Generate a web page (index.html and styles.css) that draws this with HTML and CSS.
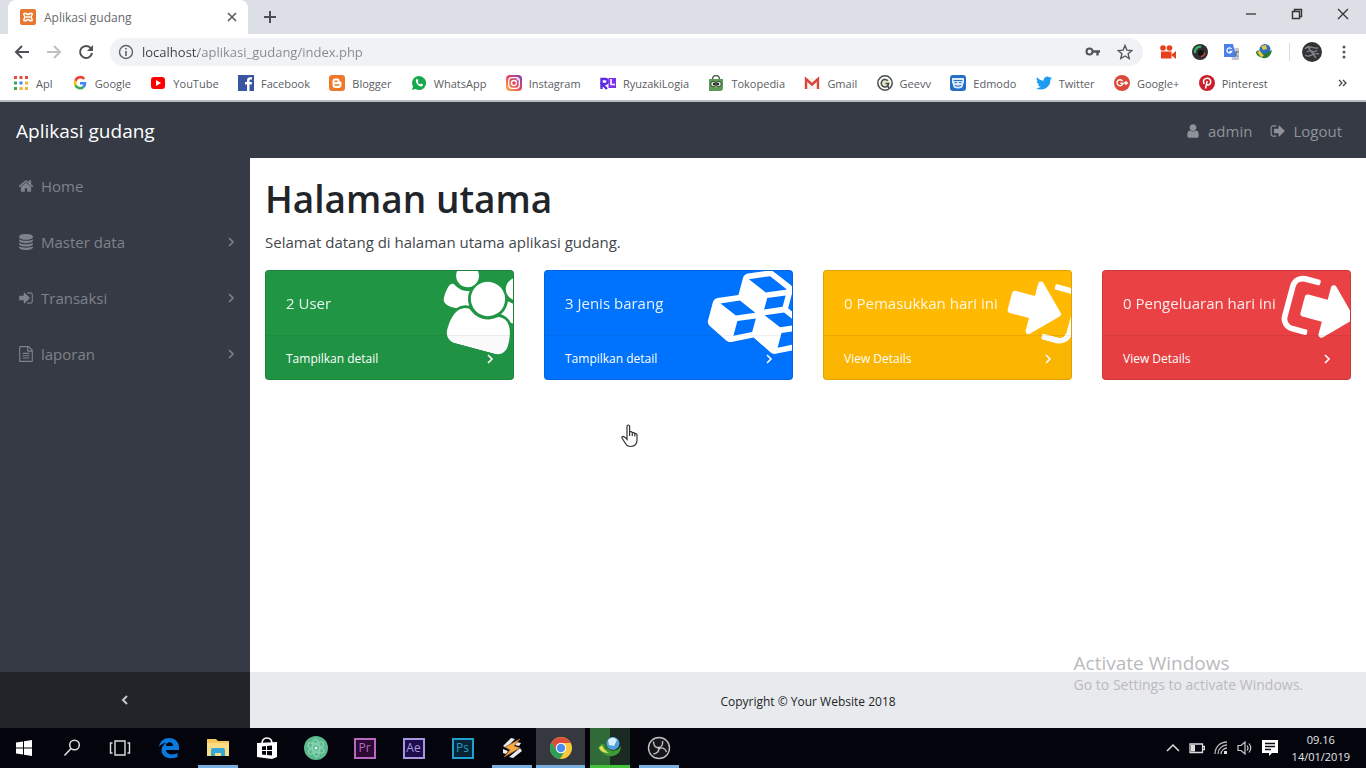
FILE: index.html
```html
<!DOCTYPE html>
<html lang="id">
<head>
<meta charset="utf-8">
<title>Aplikasi gudang</title>
<link rel="stylesheet" href="styles.css">
</head>
<body>
<svg class="defs" aria-hidden="true">
  <symbol id="users" viewBox="0 0 1920 1792"><path d="M593 896q-162 5-265 128h-134q-82 0-138-40.5t-56-118.5q0-353 124-353 6 0 43.5 21t97.5 42.5 119 21.5q67 0 133-23-5 37-5 66 0 139 81 256zm1071 637q0 120-73 189.5t-194 69.5h-874q-121 0-194-69.5t-73-189.5q0-53 3.5-103.5t14-109 26.5-108.5 43-97.5 62-81 85.5-53.5 111.5-20q10 0 43 21.5t73 48 107 48 135 21.5 135-21.5 107-48 73-48 43-21.5q61 0 111.5 20t85.5 53.5 62 81 43 97.5 26.5 108.5 14 109 3.5 103.5zm-1024-1277q0 106-75 181t-181 75-181-75-75-181 75-181 181-75 181 75 75 181zm704 384q0 159-112.5 271.5t-271.5 112.5-271.5-112.5-112.5-271.5 112.5-271.5 271.5-112.5 271.5 112.5 112.5 271.5zm576 225q0 78-56 118.5t-138 40.5h-134q-103-123-265-128 81-117 81-256 0-29-5-66 66 23 133 23 59 0 119-21.5t97.5-42.5 43.5-21q124 0 124 353zm-128-609q0 106-75 181t-181 75-181-75-75-181 75-181 181-75 181 75 75 181z"/></symbol>
  <symbol id="cubes" viewBox="0 0 2304 1792"><path d="M640 1632l384-192v-314l-384 164v342zm-64-454l404-173-404-173-404 173zm1088 454l384-192v-314l-384 164v342zm-64-454l404-173-404-173-404 173zm-448-293l384-165v-266l-384 164v267zm-64-379l441-189-441-189-441 189zm1088 518v416q0 36-19 67t-52 47l-448 224q-25 14-57 14t-57-14l-448-224q-4-2-7-4-2 2-7 4l-448 224q-25 14-57 14t-57-14l-448-224q-33-16-52-47t-19-67v-416q0-38 21.5-70t56.5-48l434-186v-400q0-38 21.5-70t56.5-48l448-192q23-10 50-10t50 10l448 192q35 16 56.5 48t21.5 70v400l434 186q36 16 57 48t21 70z"/></symbol>
  <symbol id="sign-in" viewBox="0 0 1792 1792"><path d="M1312 896q0 26-19 45l-544 544q-19 19-45 19t-45-19-19-45v-288h-448q-26 0-45-19t-19-45v-384q0-26 19-45t45-19h448v-288q0-26 19-45t45-19 45 19l544 544q19 19 19 45zm352-352v704q0 119-84.5 203.5t-203.5 84.5h-320q-13 0-22.5-9.5t-9.5-22.5q0-4-1-20t-.5-26.5 3-23.5 10-19.5 20.5-6.5h320q66 0 113-47t47-113v-704q0-66-47-113t-113-47h-312l-11.5-1-11.5-3-8-5.5-7-9-2-13.5q0-4-1-20t-.5-26.5 3-23.5 10-19.5 20.5-6.5h320q119 0 203.5 84.5t84.5 203.5z"/></symbol>
  <symbol id="sign-out" viewBox="0 0 1792 1792"><path d="M704 1440q0 4 1 20t.5 26.5-3 23.5-10 19.5-20.5 6.5h-320q-119 0-203.5-84.5t-84.5-203.5v-704q0-119 84.5-203.5t203.5-84.5h320q13 0 22.5 9.5t9.5 22.5q0 4 1 20t.5 26.5-3 23.5-10 19.5-20.5 6.5h-320q-66 0-113 47t-47 113v704q0 66 47 113t113 47h312l11.5 1 11.5 3 8 5.5 7 9 2 13.5zm928-544q0 26-19 45l-544 544q-19 19-45 19t-45-19-19-45v-288h-448q-26 0-45-19t-19-45v-384q0-26 19-45t45-19h448v-288q0-26 19-45t45-19 45 19l544 544q19 19 19 45z"/></symbol>
  <symbol id="home" viewBox="0 0 1792 1792"><path d="M1472 992v480q0 26-19 45t-45 19h-384v-384h-256v384h-384q-26 0-45-19t-19-45v-480q0-1 .5-3t.5-3l575-474 575 474q1 2 1 6zm223-69l-62 74q-8 9-21 11h-3q-13 0-21-7l-692-577-692 577q-12 8-24 7-13-2-21-11l-62-74q-8-10-7-23.5t11-21.5l719-599q32-26 76-26t76 26l244 204v-195q0-14 9-23t23-9h192q14 0 23 9t9 23v408l219 182q10 8 11 21.5t-7 23.5z"/></symbol>
  <symbol id="database" viewBox="0 0 1792 1792"><path d="M896 768q237 0 443-43t325-127v170q0 69-103 128t-280 93.5-385 34.5-385-34.5-280-93.5-103-128v-170q119 84 325 127t443 43zm0 768q237 0 443-43t325-127v170q0 69-103 128t-280 93.5-385 34.5-385-34.5-280-93.5-103-128v-170q119 84 325 127t443 43zm0-384q237 0 443-43t325-127v170q0 69-103 128t-280 93.5-385 34.5-385-34.5-280-93.5-103-128v-170q119 84 325 127t443 43zm0-1152q208 0 385 34.5t280 93.5 103 128v128q0 69-103 128t-280 93.5-385 34.5-385-34.5-280-93.5-103-128v-128q0-69 103-128t280-93.5 385-34.5z"/></symbol>
  <symbol id="file" viewBox="0 0 1792 1792"><path d="M1596 380q28 28 48 76t20 88v1152q0 40-28 68t-68 28h-1344q-40 0-68-28t-28-68v-1600q0-40 28-68t68-28h896q40 0 88 20t76 48zm-444-244v376h376q-10-29-22-41l-313-313q-12-12-41-22zm384 1528v-1024h-416q-40 0-68-28t-28-68v-416h-768v1536h1280zm-1024-864q0-14 9-23t23-9h704q14 0 23 9t9 23v64q0 14-9 23t-23 9h-704q-14 0-23-9t-9-23v-64zm736 224q14 0 23 9t9 23v64q0 14-9 23t-23 9h-704q-14 0-23-9t-9-23v-64q0-14 9-23t23-9h704zm0 256q14 0 23 9t9 23v64q0 14-9 23t-23 9h-704q-14 0-23-9t-9-23v-64q0-14 9-23t23-9h704z"/></symbol>
  <symbol id="user" viewBox="0 0 1792 1792"><path d="M1536 1399q0 109-62.5 187t-150.5 78h-854q-88 0-150.5-78t-62.5-187q0-85 8.5-160.5t31.5-152 58.5-131 94-89 134.5-34.5q131 128 313 128t313-128q76 0 134.5 34.5t94 89 58.5 131 31.5 152 8.5 160.5zm-256-887q0 159-112.5 271.5t-271.5 112.5-271.5-112.5-112.5-271.5 112.5-271.5 271.5-112.5 271.5 112.5 112.5 271.5z"/></symbol>
  <symbol id="chevron" viewBox="0 0 8 10"><path d="M2 1l4 4-4 4" fill="none" stroke="currentColor" stroke-width="1.6"/></symbol>
</svg>

<header class="browser">
  <div class="tabstrip">
    <div class="tab">
      <svg class="i16" viewBox="0 0 16 16"><rect width="16" height="16" rx="2" fill="#e8772e"/><path d="M4 4.500c2-1 3 1 4 1s2-2 4-1c1 1-1 2.500-1 3.500s2 2.500 1 3.500c-2 1-3-1-4-1s-2 2-4 1c-1-1 1-2.500 1-3.500s-2-2.500-1-3.500zM6 8h4" fill="none" stroke="#fff" stroke-width="1.600"/></svg>
      <span class="tab-title">Aplikasi gudang</span>
      <button class="plain" aria-label="Close tab"><svg class="i10" viewBox="0 0 10 10"><path d="M1 1l8 8M9 1l-8 8" stroke="#55585c" stroke-width="1.600"/></svg></button>
    </div>
    <button class="plain newtab" aria-label="New tab"><svg class="i12" viewBox="0 0 12 12"><path d="M6 0v12M0 6h12" stroke="#4b4e52" stroke-width="2"/></svg></button>
    <div class="window-controls">
      <button class="plain" aria-label="Minimize"><svg class="i12" viewBox="0 0 12 12"><path d="M1 6h10" stroke="#444" stroke-width="1.400"/></svg></button>
      <button class="plain" aria-label="Restore"><svg class="i12" viewBox="0 0 12 12"><path d="M1.500 3.500h7v7h-7zM3.500 3V1.500h7v7H9" fill="none" stroke="#333" stroke-width="1.400"/></svg></button>
      <button class="plain" aria-label="Close"><svg class="i12" viewBox="0 0 12 12"><path d="M1 1l10 10M11 1L1 11" stroke="#333" stroke-width="1.300"/></svg></button>
    </div>
  </div>

  <div class="toolbar">
    <button class="plain" aria-label="Back"><svg class="i16" viewBox="0 0 16 16"><path d="M15 8H2M8 2L2 8l6 6" fill="none" stroke="#4e5155" stroke-width="2"/></svg></button>
    <button class="plain" aria-label="Forward"><svg class="i16" viewBox="0 0 16 16"><path d="M1 8h13M8 2l6 6-6 6" fill="none" stroke="#bfc0c4" stroke-width="2"/></svg></button>
    <button class="plain" aria-label="Reload"><svg class="i16" viewBox="0 0 16 16"><path d="M13 4.500A6 6 0 1 0 14 9" fill="none" stroke="#4e5155" stroke-width="2"/><path d="M15 1v6H9z" fill="#4e5155"/></svg></button>
    <div class="omnibox">
      <svg class="i16" viewBox="0 0 16 16"><circle cx="8" cy="8" r="6.500" fill="none" stroke="#5f6368" stroke-width="1.400"/><path d="M8 7v5M8 4v1.600" stroke="#5f6368" stroke-width="1.600"/></svg>
      <input class="url" type="text" aria-label="Address" value="localhost/aplikasi_gudang/index.php">
      <svg class="i16" viewBox="0 0 16 16"><circle cx="4.500" cy="7.500" r="3" fill="none" stroke="#505357" stroke-width="2"/><path d="M7.500 7.500h7.500M12.500 7.500v4" stroke="#505357" stroke-width="2.400"/></svg>
      <svg class="i16" viewBox="0 0 16 16"><path d="M8 1.500l1.900 4.600 4.900.4-3.700 3.200 1.100 4.800L8 12l-4.200 2.500 1.100-4.800L1.200 6.500l4.900-.4z" fill="none" stroke="#55585c" stroke-width="1.400"/></svg>
    </div>
    <div class="extensions">
      <svg class="i18" viewBox="0 0 18 18"><g fill="#e8401c"><circle cx="4" cy="5" r="2.800"/><circle cx="10.500" cy="5" r="2.800"/><rect x="2" y="8.500" width="10.500" height="7"/><path d="M12 12l5-4v8z"/></g></svg>
      <svg class="i18" viewBox="0 0 18 18"><circle cx="9" cy="9" r="8" fill="#303033"/><path d="M4 10a5 5 0 0 1 6-6" fill="none" stroke="#37b26a" stroke-width="2.500"/><circle cx="10" cy="10" r="3" fill="#111"/><path d="M10 13.500a4 4 0 0 0 3.500-4" fill="none" stroke="#c44" stroke-width="1.500"/></svg>
      <svg class="i18" viewBox="0 0 18 18"><path d="M7 5h9v12H9z" fill="#c3c8cf"/><path d="M1 1h9l3 13H1z" fill="#4a80e8"/><path d="M8.500 6a2.500 2.500 0 1 0 .2 2.500H6.500" fill="none" stroke="#fff" stroke-width="1.300"/><path d="M11 9h5M13.500 8c0 3-1 4-2 5M12 10l3 4" stroke="#607d8b"/></svg>
      <svg class="i18" viewBox="0 0 18 18"><circle cx="10" cy="6.500" r="5.500" fill="#2d6fbe"/><path d="M6 3l5-1 1 4-4 1z" fill="#e3c445"/><path d="M1 9c2-3 5-1 5 0s3 3 6 1l5-3c-1 6-5 9-9 8s-7-3-7-6z" fill="#2c7a2e"/><path d="M2 9l3-1 4 5-3 1z" fill="#e8d04c"/></svg>
    </div>
    <svg class="avatar" viewBox="0 0 20 20"><circle cx="10" cy="10" r="10" fill="#333338"/><path d="M3 7c4-5 7 0 13-1M3 13c6 4 6-3 14-1M6 5l8 11M5 10c5-4 7 3 10-2" fill="none" stroke="#85858c" stroke-width="1.300"/></svg>
    <button class="plain" aria-label="Menu"><svg class="menu-dots" viewBox="0 0 4 16"><g fill="#55585c"><circle cx="2" cy="3" r="1.500"/><circle cx="2" cy="8" r="1.500"/><circle cx="2" cy="13" r="1.500"/></g></svg></button>
  </div>

  <nav class="bookmarks" aria-label="Bookmarks">
    <div class="bookmark-list">
    <a href="#"><svg class="i16" viewBox="0 0 16 16"><g fill="#e34a3b"><path d="M1 1h3v3H1zM6.500 1h3v3h-3zM12 1h3v3h-3z"/></g><path d="M1 6.500h3v3H1z" fill="#3aa757"/><path d="M6.500 6.500h3v3h-3z" fill="#4285f4"/><path d="M12 6.500h3v3h-3zM12 12h3v3h-3zM6.500 12h3v3h-3z" fill="#f2b32c"/><path d="M1 12h3v3H1z" fill="#3aa757"/></svg>Apl</a>
    <a href="#"><svg class="i16" viewBox="0 0 16 16"><g fill="none" stroke-width="2.600"><path d="M12.200 4A5 5 0 0 0 3.500 5.800" stroke="#ea4335"/><path d="M3.500 5.800a5 5 0 0 0 0 4.400" stroke="#fbbc05"/><path d="M3.500 10.200a5 5 0 0 0 7.800 1.800" stroke="#34a853"/><path d="M11.300 12A5 5 0 0 0 13 8.200H8" stroke="#4285f4"/></g></svg>Google</a>
    <a href="#"><svg class="i16" viewBox="0 0 16 16"><rect x="1" y="2" width="14" height="12" rx="3" fill="#f00"/><path d="M6 5l5 3-5 3z" fill="#fff"/></svg>YouTube</a>
    <a href="#"><svg class="i16" viewBox="0 0 16 16"><path d="M0 0h16v16H0z" fill="#3a559f"/><path d="M9 16V9.500H7V7h2V5.500C9 3.300 10.300 2.200 12.300 2.200H14v2.300h-1.300c-.8 0-1.200.4-1.200 1.200V7H14l-.4 2.500h-2.100V16z" fill="#fff"/></svg>Facebook</a>
    <a href="#"><svg class="i16" viewBox="0 0 16 16"><rect width="16" height="16" rx="3" fill="#f0782a"/><path d="M6 3.500h2.500a2 2 0 0 1 2 2v1h1a1 1 0 0 1 1 1v2.500a3 3 0 0 1-3 3H6.500a3 3 0 0 1-3-3v-4a2.500 2.500 0 0 1 2.500-2.500z" fill="#fff"/><path d="M6 6.300h2M6 10h4" stroke="#f0782a" stroke-width="1.400" stroke-linecap="round"/></svg>Blogger</a>
    <a href="#"><svg class="i16" viewBox="0 0 16 16"><path d="M8 1a7 7 0 1 1-3.400 13.100L1 15l1-3.500A7 7 0 0 1 8 1z" fill="#18a94f"/><path d="M5 4.500l1.500-.4.900 2-.8 1c.6 1.200 1.400 1.900 2.500 2.400l1-.9 1.900 1-.5 1.500c-3 1.500-7.500-3-6.500-6.600z" fill="#fff"/></svg>WhatsApp</a>
    <a href="#"><svg class="i16" viewBox="0 0 16 16"><defs><linearGradient id="ig" x1="0" y1="1" x2="1" y2="0"><stop stop-color="#fdc03b"/><stop offset=".5" stop-color="#e6455b"/><stop offset="1" stop-color="#7a3bc8"/></linearGradient></defs><rect width="16" height="16" rx="4" fill="url(#ig)"/><rect x="2.700" y="2.700" width="10.600" height="10.600" rx="3" fill="none" stroke="#fff" stroke-width="1.300"/><circle cx="8" cy="8" r="2.500" fill="none" stroke="#fff" stroke-width="1.300"/><circle cx="11.200" cy="4.800" r=".8" fill="#fff"/></svg>Instagram</a>
    <a href="#"><svg class="i16" viewBox="0 0 16 16"><path d="M1.500 14V4h3.700a2.300 2.300 0 0 1 0 5H2l5 5" fill="none" stroke="#5a2be0" stroke-width="2.400"/><path d="M8.500 3H16v10H8.500z" fill="#7a2ff0"/><path d="M11 4v5.500h4" fill="none" stroke="#fff" stroke-width="1.600"/></svg>RyuzakiLogia</a>
    <a href="#"><svg class="i16" viewBox="0 0 16 16"><path d="M4.500 4a3.500 3.500 0 0 1 7 0" fill="none" stroke="#4b5a4b" stroke-width="1.500"/><path d="M1 4h14v9q0 3-3 3H1z" fill="#5c9a58"/><circle cx="5.300" cy="9" r="2.600" fill="#e9efe8" stroke="#344034"/><circle cx="10.700" cy="9" r="2.600" fill="#e9efe8" stroke="#344034"/><circle cx="6" cy="9" r="1.200" fill="#222"/><circle cx="10" cy="9" r="1.200" fill="#222"/><path d="M7 11.500h2l-1 1.500z" fill="#e8c33e"/></svg>Tokopedia</a>
    <a href="#"><svg class="i16" viewBox="0 0 16 16"><path d="M1 3h14v11H1z" fill="#f5f2f1"/><path d="M2 14V4l6 5.500L14 4v10" fill="none" stroke="#d9473a" stroke-width="2.400"/></svg>Gmail</a>
    <a href="#"><svg class="i16" viewBox="0 0 16 16"><circle cx="8" cy="8" r="7.200" fill="#fff" stroke="#454b50" stroke-width="1.500"/><circle cx="8" cy="8" r="5" fill="#dfe8c2"/><path d="M10.800 5.800A3.700 3.700 0 1 0 11.700 8.500H8.500M10 10l2 3" fill="none" stroke="#454b50" stroke-width="1.500"/></svg>Geevv</a>
    <a href="#"><svg class="i16" viewBox="0 0 16 16"><rect width="16" height="16" rx="3" fill="#276fc4"/><path d="M2 3h12v5q-1 0-1 2 0 3.500-5 3.500T3 10q0-2-1-2z" fill="#dcebfb"/><path d="M3.500 5.500h9M4.500 7.500h2.500M9 7.500h2.500M5 10.200q3 2 6 0" fill="none" stroke="#276fc4" stroke-width="1.100"/></svg>Edmodo</a>
    <a href="#"><svg class="i16" viewBox="0 0 24 24"><path d="M24 4.600a10 10 0 0 1-2.800.8 5 5 0 0 0 2.100-2.700 10 10 0 0 1-3.100 1.200 4.900 4.900 0 0 0-8.400 4.500A14 14 0 0 1 1.700 3.200a4.900 4.900 0 0 0 1.500 6.500 5 5 0 0 1-2.200-.6 4.900 4.900 0 0 0 3.900 4.900 5 5 0 0 1-2.200.1 4.900 4.900 0 0 0 4.600 3.400A10 10 0 0 1 0 19.500 14 14 0 0 0 21.500 7.100 10 10 0 0 0 24 4.600z" fill="#1d9bf0"/></svg>Twitter</a>
    <a href="#"><svg class="i16" viewBox="0 0 16 16"><circle cx="8" cy="8" r="8" fill="#db4a39"/><path d="M8.500 6A3 3 0 1 0 9 8.300H6.300M12 6v4M10 8h4" fill="none" stroke="#fff" stroke-width="1.400"/></svg>Google+</a>
    <a href="#"><svg class="i16" viewBox="0 0 16 16"><circle cx="8" cy="8" r="8" fill="#cb1f2c"/><path d="M5.300 9C3 5 6 3.300 8.200 3.300s4 1.500 3.400 4.200-3.500 3.400-4 1.600M8.200 6L6.500 13.500" fill="none" stroke="#fff" stroke-width="1.500"/></svg>Pinterest</a>
    </div>
    <button class="plain" aria-label="More bookmarks"><svg class="i10" viewBox="0 0 10 10"><path d="M1 2l3 3-3 3M5 2l3 3-3 3" fill="none" stroke="#444" stroke-width="1.300"/></svg></button>
  </nav>
</header>

<div class="app">
  <header class="navbar">
    <a class="brand" href="#">Aplikasi gudang</a>
    <nav class="account">
      <a href="#"><svg class="i16"><use href="#user"/></svg>admin</a>
      <a href="#"><svg class="i16"><use href="#sign-out"/></svg>Logout</a>
    </nav>
  </header>
  <div class="wrapper">
    <aside class="sidebar">
      <nav class="menu">
        <a href="#"><svg class="i16"><use href="#home"/></svg><span>Home</span></a>
        <a href="#"><svg class="i16"><use href="#database"/></svg><span>Master data</span><svg class="chev"><use href="#chevron"/></svg></a>
        <a href="#"><svg class="i16"><use href="#sign-in"/></svg><span>Transaksi</span><svg class="chev"><use href="#chevron"/></svg></a>
        <a href="#"><svg class="i16"><use href="#file"/></svg><span>laporan</span><svg class="chev"><use href="#chevron"/></svg></a>
      </nav>
      <button class="toggler" aria-label="Toggle sidebar"><svg class="i10" viewBox="0 0 10 10"><path d="M7 1L3 5l4 4" fill="none" stroke="#c5c8cb" stroke-width="2"/></svg></button>
    </aside>
    <div class="content">
      <main class="main">
        <h1>Halaman utama</h1>
        <p class="lead">Selamat datang di halaman utama aplikasi gudang.</p>
        <div class="cards">
          <section class="card green">
            <div class="art"><svg><use href="#users"/></svg></div>
            <div class="card-body">2 User</div>
            <a class="card-footer" href="#">Tampilkan detail<svg class="chev"><use href="#chevron"/></svg></a>
          </section>
          <section class="card blue">
            <div class="art"><svg><use href="#cubes"/></svg></div>
            <div class="card-body">3 Jenis barang</div>
            <a class="card-footer" href="#">Tampilkan detail<svg class="chev"><use href="#chevron"/></svg></a>
          </section>
          <section class="card yellow">
            <div class="art"><svg><use href="#sign-in"/></svg></div>
            <div class="card-body">0 Pemasukkan hari ini</div>
            <a class="card-footer" href="#">View Details<svg class="chev"><use href="#chevron"/></svg></a>
          </section>
          <section class="card red">
            <div class="art"><svg><use href="#sign-out"/></svg></div>
            <div class="card-body">0 Pengeluaran hari ini</div>
            <a class="card-footer" href="#">View Details<svg class="chev"><use href="#chevron"/></svg></a>
          </section>
        </div>
      </main>
      <footer class="footer">Copyright © Your Website 2018</footer>
    </div>
  </div>
  <div class="watermark"><div class="wm-title">Activate Windows</div><div class="wm-text">Go to Settings to activate Windows.</div></div>
</div>

<footer class="taskbar">
  <div class="system-buttons">
    <button aria-label="Start"><svg class="i18" viewBox="0 0 18 18"><path d="M1 3.500l7-1v6H1zM9 2.300L17 1v7.500H9zM1 9.500h7v6l-7-1zM9 9.500h8V17l-8-1.300z" fill="#fff"/></svg></button>
    <button aria-label="Search"><svg class="i18" viewBox="0 0 18 18"><circle cx="11.500" cy="6" r="4.800" fill="none" stroke="#ddd" stroke-width="1.500"/><path d="M8 9.500L1.500 16.500" stroke="#ddd" stroke-width="1.600"/></svg></button>
    <button aria-label="Task view"><svg class="i22" viewBox="0 0 22 22"><path d="M6 4h10v14H6zM3.500 6H1.500v10h2M18.500 6h2v10h-2" fill="none" stroke="#ddd" stroke-width="1.400"/></svg></button>
  </div>
  <div class="tasks">
    <button aria-label="Edge"><svg class="i22" viewBox="0 0 22 22"><path d="M1 10C2 4 6 1 11 1c6 0 10 4 10 9v3H8c.5 5 7 5.500 11.500 3v4c-7 3-16 1-16-7 0-3 2-5.500 5-7C4.500 6 2.500 8 1 10zm7-1h7c0-5-6.500-5-7 0z" fill="#0a78dc"/></svg></button>
    <button class="running" aria-label="File Explorer"><svg class="i22" viewBox="0 0 22 22"><path d="M0 2h9l2 2h11v15H0z" fill="#f5c65b"/><path d="M0 6h22v13H0z" fill="#fbdc85"/><path d="M4 19v-6q0-2 2-2h10q2 0 2 2v6h-4v-3H8v3z" fill="#35a6d8"/></svg></button>
    <button aria-label="Store"><svg class="i22" viewBox="0 0 22 22"><path d="M6 7q0-6 5-6t5 6" fill="none" stroke="#fff" stroke-width="1.600"/><path d="M1 6l20-1v15l-5 2-15-2z" fill="#fff"/><path d="M6 9.500l4-.5v4H6zM11 9l5-.5V13h-5zM6 14h4v4l-4-.5zM11 14h5v4.500l-5-.5z" fill="#05050c"/></svg></button>
    <button aria-label="Atom"><svg class="i24" viewBox="0 0 24 24"><circle cx="12" cy="12" r="12" fill="#5cb98f"/><g fill="none" stroke="#93d8b7"><ellipse cx="12" cy="12" rx="9" ry="3.500" transform="rotate(25 12 12)"/><ellipse cx="12" cy="12" rx="9" ry="3.500" transform="rotate(85 12 12)"/><ellipse cx="12" cy="12" rx="9" ry="3.500" transform="rotate(145 12 12)"/></g><circle cx="12" cy="12" r="1.500" fill="#d5ffe7"/></svg></button>
    <button aria-label="Premiere Pro"><span class="adobe pr">Pr</span></button>
    <button aria-label="After Effects"><span class="adobe ae">Ae</span></button>
    <button aria-label="Photoshop"><span class="adobe ps">Ps</span></button>
    <button class="running" aria-label="Winamp"><svg class="i22" viewBox="0 0 22 22"><path d="M10 1l4 1-9 9-3-2zM15 5l5 1-2 3-4-1zM2 12l5 2-2 3-3-1zM19 11l2 3-9 7-4-1z" fill="#e9edf2"/><path d="M19 2L4 10l5 3-6 7L19 11l-6-2z" fill="#f5ab42" stroke="#a5662a" stroke-width=".8"/></svg></button>
    <button class="running current" aria-label="Chrome"><svg class="i24" viewBox="0 0 24 24"><circle cx="12" cy="12" r="11" fill="#f8c93a"/><path d="M2.500 6.500A11 11 0 0 1 21.600 7H12a5 5 0 0 0-4.500 7z" fill="#dd4b3e"/><path d="M2.500 6.500A11 11 0 0 0 11 23l5-8.500a5 5 0 0 1-8.500-.5z" fill="#2d9d57"/><circle cx="12" cy="12" r="5.200" fill="#fff"/><circle cx="12" cy="12" r="4.200" fill="#4c8bf5"/></svg></button>
    <button class="running download" aria-label="Download manager"><svg class="i24" viewBox="0 0 24 24"><circle cx="15" cy="7.500" r="6.500" fill="#4da0dc"/><path d="M10 4q5-5 9 0l-3 6-5-1z" fill="#d9eef9"/><path d="M0 12q3-6 7-3-2 3 5 5t11-4q0 8-8 10T0 12z" fill="#3c9b35"/><path d="M1 12q3-4 4-1t6 6q-8 0-10-5z" fill="#e7dc54"/></svg></button>
    <button class="running" aria-label="OBS Studio"><svg class="i24" viewBox="0 0 24 24"><circle cx="12" cy="12" r="10.500" fill="#17171b" stroke="#bfc0c4" stroke-width="1.400"/><path d="M6.500 5.500q0 6 5.500 6.500 6-1 7.500 4M12 12q0 5-5.500 6M12 12q4.500-2 3.500-7" fill="none" stroke="#bfc0c4" stroke-width="1.400"/><circle cx="12" cy="12" r="1.500" fill="#bfc0c4"/></svg></button>
  </div>
  <div class="tray">
    <svg class="i16" viewBox="0 0 16 16"><path d="M2 11l6-6 6 6" fill="none" stroke="#ddd" stroke-width="1.500"/></svg>
    <svg class="i16" viewBox="0 0 16 16"><path d="M1 4h12.500v8.500H1zM14 6.500h1.500v3H14" fill="none" stroke="#ddd" stroke-width="1.300"/><path d="M2 5h4v6.500H2z" fill="#ddd"/></svg>
    <svg class="i16" viewBox="0 0 16 16"><g fill="none" stroke="#bbb" stroke-width="1.300"><path d="M2 14C2 7 7 2 14 2M5 14c0-5 4-9 9-9M8 14c0-3 3-6 6-6"/></g><path d="M11 14v-3h3v3z" fill="#ddd"/></svg>
    <svg class="i16" viewBox="0 0 16 16"><path d="M1 5.500h3L8 2v12l-4-3.500H1zM10 5.500q2 2.500 0 5M12 3.500q3.500 4.500 0 9" fill="none" stroke="#ccc" stroke-width="1.200"/></svg>
    <svg class="i18" viewBox="0 0 18 18"><path d="M1 1h16v13h-6l-3 3v-3H1z" fill="#fff"/><path d="M4 4.500h10M4 7.500h10M4 10.500h6" stroke="#0a0a12" stroke-width="1.300"/></svg>
    <div class="clock"><div>09.16</div><div>14/01/2019</div></div>
  </div>
</footer>

<svg class="pointer" viewBox="0 0 18 24" aria-hidden="true"><path d="M6 14V2.500q0-1.500 1.300-1.500T8.600 2.500V8q2-1 2.700.8 2-.7 2.500.9 2.200-.5 2.200 1.300v5q0 6-6 6.500-4 0-5.500-3L1 14q-.5-1.500 1-1.700 1.500 0 4 3zM8.600 8v4M11.300 9v3M13.800 10v2.500" fill="#fff" stroke="#333" stroke-width="1.200"/></svg>
</body>
</html>
```
FILE: styles.css
```css
* { box-sizing: border-box; }

body {
  margin: 0;
  height: 100vh;
  display: flex;
  flex-direction: column;
  overflow: hidden;
  font-family: "Open Sans", "Noto Sans", sans-serif;
  color: #212529;
}

a { color: inherit; text-decoration: none; }
svg { display: block; flex: none; fill: currentColor; }
.defs { position: absolute; width: 0; height: 0; }
button { font: inherit; color: inherit; border: 0; padding: 0; background: none; }
.plain { display: flex; }

.i10 { width: 10px; height: 10px; }
.i12 { width: 12px; height: 12px; }
.i16 { width: 16px; height: 16px; }
.i18 { width: 18px; height: 18px; }
.i22 { width: 22px; height: 22px; }
.i24 { width: 24px; height: 24px; }

/* Browser window */
.browser { background: #fff; border-bottom: 2px solid #b9bcc1; }
.tabstrip { height: 34px; display: flex; align-items: stretch; background: #dcdfe5; padding-left: 8px; }
.tab {
  width: 240px;
  display: flex;
  align-items: center;
  gap: 8px;
  padding: 0 11px 0 12px;
  background: #fff;
  border-radius: 8px 8px 0 0;
}
.tab-title { flex: 1; font-size: 12px; color: #66696d; }
.newtab { align-self: center; margin-left: 16px; }
.window-controls { margin-left: auto; display: flex; gap: 34px; padding: 8px 17px 0 0; }

.toolbar { height: 36px; display: flex; align-items: center; gap: 16px; padding: 0 20px 0 14px; }
.omnibox {
  flex: 1;
  height: 28px;
  display: flex;
  align-items: center;
  gap: 16px;
  padding: 0 10px 0 8px;
  border-radius: 14px;
  background: #f0f2f6;
}
.url {
  flex: 1;
  min-width: 0;
  border: 0;
  padding: 0;
  margin-left: -8px;
  font-family: inherit;
  font-size: 13px;
  color: transparent;
  background: linear-gradient(90deg, #3c4043 56px, #85888c 56px);
  background-clip: text;
  -webkit-background-clip: text;
}
.extensions { display: flex; gap: 14px; padding-right: 16px; border-right: 1px solid #d8dade; }
.avatar { width: 20px; height: 20px; margin: 0 4px 0 -4px; }
.menu-dots { width: 4px; height: 16px; }

.bookmarks {
  height: 30px;
  display: flex;
  align-items: center;
  justify-content: space-between;
  padding: 0 18px 4px 13px;
  font-size: 11px;
  color: #5a5d62;
}
.bookmark-list { width: 94%; display: flex; justify-content: space-between; }
.bookmarks a { display: flex; align-items: center; gap: 7px; white-space: nowrap; }

/* Application */
.app { flex: 1; min-height: 0; position: relative; display: flex; flex-direction: column; }
.navbar {
  height: 56px;
  display: flex;
  align-items: center;
  justify-content: space-between;
  padding: 2px 24px 0 16px;
  background: #353a44;
}
.brand { font-size: 19px; color: #fff; }
.account { display: flex; gap: 18px; font-size: 15px; color: #8f9399; }
.account a { display: flex; align-items: center; gap: 7px; }

.wrapper { flex: 1; min-height: 0; display: flex; }
.sidebar { width: 250px; display: flex; flex-direction: column; background: #353a44; color: #7e828a; }
.menu { flex: 1; font-size: 15px; }
.menu a { height: 56px; display: flex; align-items: center; gap: 7px; padding: 0 15px 0 18px; }
.menu span { flex: 1; }
.chev { width: 8px; height: 10px; }
.toggler { height: 56px; display: flex; align-items: center; justify-content: center; background: #212529; }

.content { flex: 1; display: flex; flex-direction: column; background: #fff; }
.main { flex: 1; padding: 16px 15px; }
h1 { margin: 0 0 8px; font-size: 37px; line-height: 50px; font-weight: 600; }
.lead { margin: 0 0 18px; font-size: 15px; line-height: 20px; color: #43474b; }
.cards { display: grid; grid-template-columns: repeat(4, 1fr); gap: 30px; }
.card {
  position: relative;
  overflow: hidden;
  height: 110px;
  display: flex;
  flex-direction: column;
  border: 1px solid rgba(0, 0, 0, .12);
  border-radius: 4px;
  color: #fff;
}
.green { background: #209645; }
.blue { background: #0073fe; }
.yellow { background: #ffb900; }
.red { background: #ea4144; }
.card-body { position: relative; flex: 1; display: flex; align-items: center; padding: 0 20px; font-size: 15px; opacity: .9; }
.card-footer {
  position: relative;
  height: 44px;
  display: flex;
  align-items: center;
  justify-content: space-between;
  padding: 2px 19px 0 20px;
  font-size: 12px;
  background: rgba(0, 0, 0, .02);
  border-top: 1px solid rgba(0, 0, 0, .06);
}
.blue .card-footer { background: none; }
.art { position: absolute; top: -1px; right: -24px; width: 104px; height: 80px; transform: rotate(15deg); }
.art svg { width: 104px; height: 80px; }

.footer { height: 56px; display: flex; align-items: center; justify-content: center; padding-top: 2px; background: #e9eaee; font-size: 12px; }

.watermark { position: absolute; right: 63px; bottom: 33px; color: #b9babd; }
.wm-title { font-size: 19px; line-height: 24px; }
.wm-text { font-size: 14px; line-height: 20px; }

/* Desktop */
.taskbar { height: 40px; display: flex; align-items: stretch; background: #04050c; }
.taskbar button { display: flex; align-items: center; justify-content: center; }
.system-buttons { display: flex; }
.system-buttons button { width: 48px; }
.tasks { display: flex; }
.tasks button { width: 49px; }
.tasks .running { background: linear-gradient(#79aee0, #79aee0) center bottom / 40px 3px no-repeat; }
.tasks .current { background-color: #35383f; background-size: 49px 3px; }
.tasks .download { background: linear-gradient(#45c13c, #45c13c) center bottom / 40px 3px no-repeat, linear-gradient(90deg, #2f6a38 20px, #1b2a22 20px) center / 40px 40px no-repeat; }
.adobe { width: 22px; height: 21px; border: 2px solid; font-size: 12px; line-height: 16px; }
.pr { color: #b768c0; background: #2c0a33; }
.ae { color: #a896e0; background: #1d0d4a; }
.ps { color: #20a0cf; background: #062436; }
.tray { margin-left: auto; display: flex; align-items: center; gap: 8px; padding-right: 16px; }
.clock { color: #e4e5e8; font-size: 11px; line-height: 17px; text-align: center; margin-left: 5px; }

.pointer { position: absolute; left: 621px; top: 424px; width: 18px; height: 24px; }
```
